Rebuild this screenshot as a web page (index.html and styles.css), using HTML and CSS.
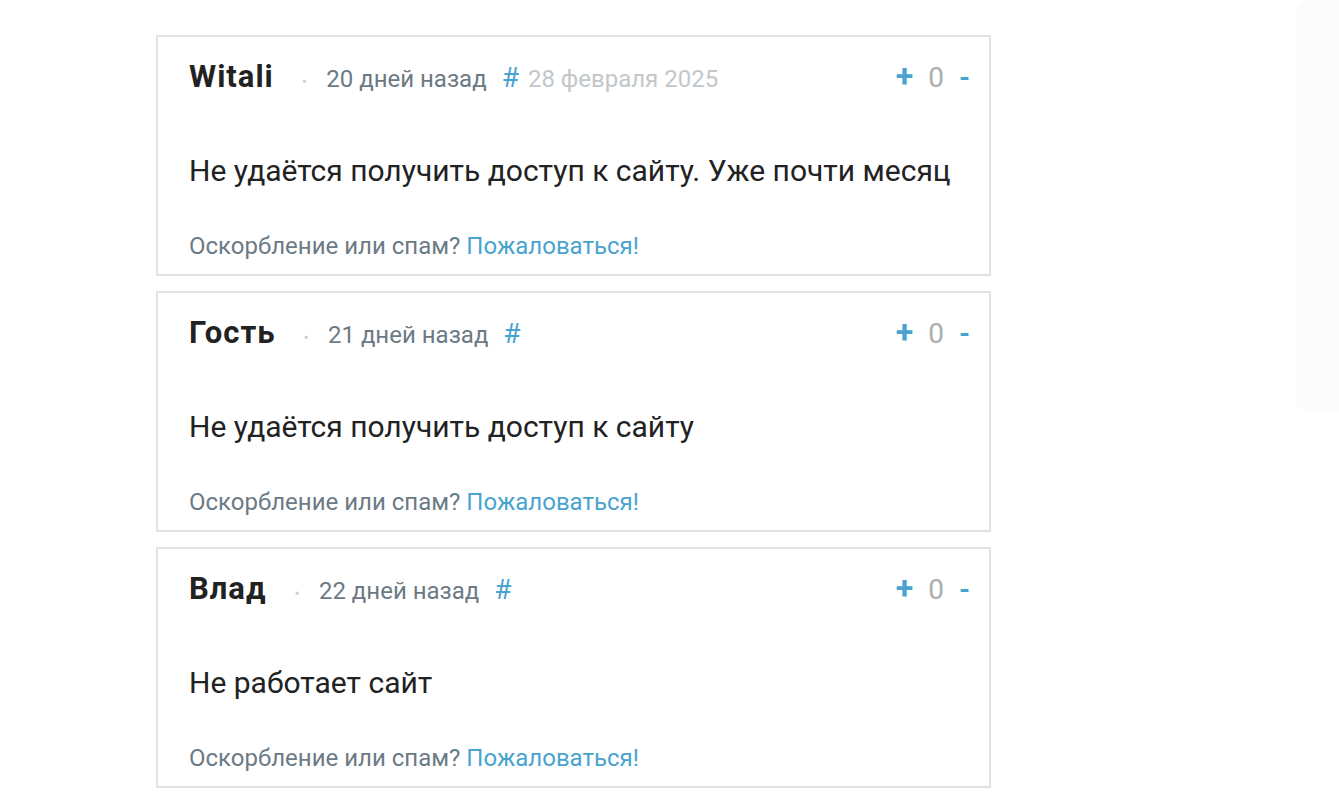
FILE: index.html
```html
<!DOCTYPE html>
<html lang="ru">
<head>
<meta charset="utf-8">
<title>Комментарии</title>
<link rel="stylesheet" href="styles.css">
</head>
<body>
<div class="page">
  <div class="comments">
    <div class="comment">
      <div class="head">
        <span class="name">Witali</span>
        <span class="dot">•</span>
        <span class="ago">20 дней назад</span>
        <a class="hash">#</a>
        <span class="date">28 февраля 2025</span>
        <div class="vote"><span class="plus">+</span><span class="score">0</span><span class="minus">-</span></div>
      </div>
      <div class="text">Не удаётся получить доступ к сайту. Уже почти месяц</div>
      <div class="report">Оскорбление или спам? <a class="link">Пожаловаться!</a></div>
    </div>
    <div class="comment">
      <div class="head">
        <span class="name">Гость</span>
        <span class="dot">•</span>
        <span class="ago">21 дней назад</span>
        <a class="hash">#</a>
        <div class="vote"><span class="plus">+</span><span class="score">0</span><span class="minus">-</span></div>
      </div>
      <div class="text">Не удаётся получить доступ к сайту</div>
      <div class="report">Оскорбление или спам? <a class="link">Пожаловаться!</a></div>
    </div>
    <div class="comment">
      <div class="head">
        <span class="name">Влад</span>
        <span class="dot">•</span>
        <span class="ago">22 дней назад</span>
        <a class="hash">#</a>
        <div class="vote"><span class="plus">+</span><span class="score">0</span><span class="minus">-</span></div>
      </div>
      <div class="text">Не работает сайт</div>
      <div class="report">Оскорбление или спам? <a class="link">Пожаловаться!</a></div>
    </div>
  </div>
  <div class="side"></div>
</div>
</body>
</html>
```
FILE: styles.css
```css
html, body {
  margin: 0;
  padding: 0;
  background: #ffffff;
}
body {
  font-family: Roboto, "Noto Sans", sans-serif;
  color: #222222;
}
.page {
  display: flex;
  justify-content: space-between;
  padding-left: 156px;
  padding-top: 35px;
}
.comments {
  width: 835px;
  display: flex;
  flex-direction: column;
  gap: 15px;
}
.comment {
  box-sizing: border-box;
  height: 241px;
  border: 2px solid #e2e2e2;
  padding: 20px 19px 0 31px;
  display: flex;
  flex-direction: column;
}
.head {
  display: flex;
  align-items: baseline;
  height: 40px;
}
.name {
  font-weight: 700;
  font-size: 31px;
  letter-spacing: 1px;
  color: #222222;
  margin-right: 28px;
}
.dot {
  color: #cfd3d6;
  font-size: 16px;
  margin-right: 19px;
}
.ago {
  font-size: 24px;
  color: #6b7a84;
  margin-right: 15px;
}
.hash {
  font-size: 28px;
  color: #4aa3cf;
  margin-right: 9px;
}
.date {
  font-size: 24px;
  color: #c3c7ca;
}
.vote {
  margin-left: auto;
  display: flex;
  align-items: baseline;
  gap: 15px;
}
.plus {
  font-size: 32px;
  font-weight: 700;
  color: #4aa3cf;
}
.score {
  font-size: 28px;
  color: #a9aeb1;
}
.minus {
  font-size: 28px;
  font-weight: 700;
  color: #4aa3cf;
}
.text {
  margin-top: 56px;
  font-size: 30px;
  color: #222222;
}
.report {
  margin-top: auto;
  margin-bottom: 14px;
  font-size: 24px;
  color: #6b7a84;
}
.link {
  color: #4aa3cf;
}
.side {
  width: 44px;
  height: 410px;
  margin-top: -35px;
  background: #fcfcfc;
  border-radius: 14px 0 0 14px;
}
```
